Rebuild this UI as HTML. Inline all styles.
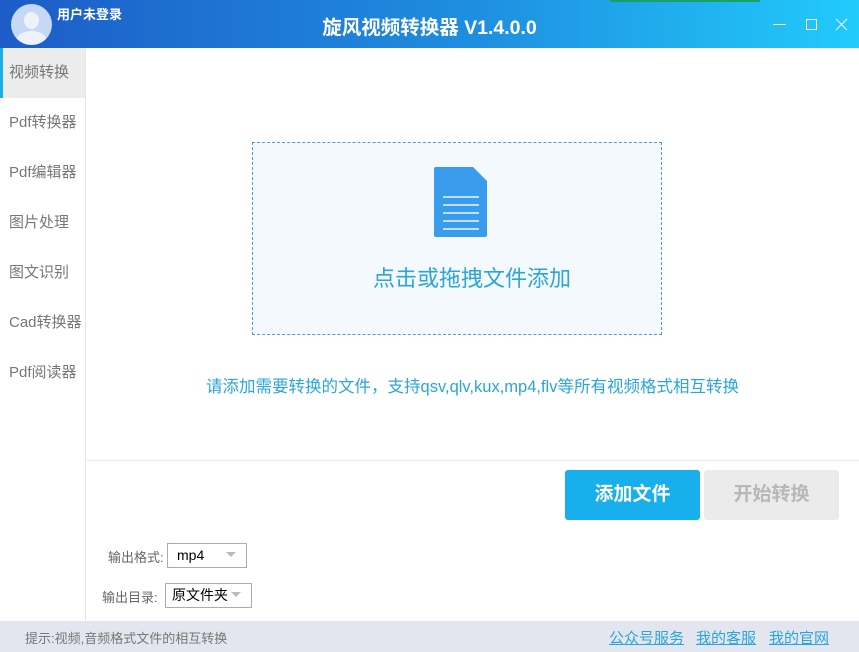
<!DOCTYPE html><html><head><meta charset="utf-8"><style>
*{margin:0;padding:0;box-sizing:border-box}
body{width:859px;height:652px;overflow:hidden;background:#fff;font-family:"Liberation Sans","Noto Sans CJK SC",sans-serif;position:relative}
.a{position:absolute}
#top{left:0;top:0;width:859px;height:48px;background:linear-gradient(90deg,#1d5cc6,#1e8ee0 55%,#22cbfb)}
.side{left:0;top:48px;width:86px;height:573px;border-right:1px solid #e6e6e6;background:#fff}
.it{position:absolute;left:0;width:85px;height:50px;line-height:50px;padding-left:9px;font-size:15px;color:#777}
</style></head><body>
<div id="top" class="a">
<div class="a" style="left:11px;top:4px;width:41px;height:41px;border-radius:50%;background:#c5d8f5;overflow:hidden">
<div class="a" style="left:13px;top:8px;width:15px;height:17px;border-radius:50%;background:#eef3fb"></div>
<div class="a" style="left:5px;top:27px;width:31px;height:20px;border-radius:50%;background:#eef3fb"></div></div>
<div class="a" style="left:57px;top:4px;color:#fff;font-size:13px;font-weight:bold">用户未登录</div>
<div class="a" style="left:0;width:859px;top:11px;text-align:center;color:#fff;font-size:19.5px;font-weight:bold">旋风视频转换器 V1.4.0.0</div>
<div class="a" style="left:773px;top:24px;width:13px;height:1px;background:#fff"></div>
<div class="a" style="left:806px;top:19px;width:11px;height:11px;border:1px solid #fff"></div>
<svg class="a" style="left:835px;top:18px" width="13" height="13"><path d="M1 1L12 12M12 1L1 12" stroke="#fff" stroke-width="1"/></svg>
</div>
<div class="a" style="left:610px;top:0;width:150px;height:2px;background:#1aa06a"></div>
<div class="a side">
<div class="it" style="top:0;background:#ececec;border-left:3px solid #1aaeea;padding-left:6px">视频转换</div>
<div class="it" style="top:50px">Pdf转换器</div>
<div class="it" style="top:100px">Pdf编辑器</div>
<div class="it" style="top:150px">图片处理</div>
<div class="it" style="top:200px">图文识别</div>
<div class="it" style="top:250px">Cad转换器</div>
<div class="it" style="top:300px">Pdf阅读器</div>
</div>
<div class="a" style="left:252px;top:142px;width:410px;height:193px;background:#f3f9fd;border:1px dashed #4a9ed8"></div>
<svg class="a" style="left:434px;top:167px" width="54" height="71"><path d="M2 0H39L53 14V68Q53 70 51 70H2Q0 70 0 68V2Q0 0 2 0Z" fill="#3a9cec"/><g stroke="#eaf4ff" stroke-width="1.5"><path d="M9 38H45M9 46H45M9 54H45M9 62H45"/><path d="M9 30H45"/></g></svg>
<div class="a" style="left:272px;width:400px;top:261px;text-align:center;color:#2ba5dc;font-size:22px">点击或拖拽文件添加</div>
<div class="a" style="left:86px;width:773px;top:373px;text-align:center;color:#2ba5dc;font-size:16.5px">请添加需要转换的文件，支持qsv,qlv,kux,mp4,flv等所有视频格式相互转换</div>
<div class="a" style="left:86px;top:460px;width:773px;height:1px;background:#ececec"></div>
<div class="a" style="left:565px;top:470px;width:135px;height:50px;border-radius:3px;background:#18b0ec;color:#fff;font-size:19px;font-weight:bold;text-align:center;line-height:50px">添加文件</div>
<div class="a" style="left:704px;top:470px;width:135px;height:50px;border-radius:3px;background:#ebebeb;color:#b8b8b8;font-size:19px;font-weight:bold;text-align:center;line-height:50px">开始转换</div>
<div class="a" style="left:108px;top:547px;font-size:13px;color:#666">输出格式:</div>
<div class="a" style="left:167px;top:543px;width:80px;height:25px;border:1px solid #aab;font-size:14px;line-height:23px;padding-left:9px">mp4</div>
<div class="a" style="left:226px;top:552px;border:5px solid transparent;border-top:5px solid #bbb"></div>
<div class="a" style="left:102px;top:587px;font-size:13px;color:#666">输出目录:</div>
<div class="a" style="left:165px;top:583px;width:87px;height:25px;border:1px solid #aab;font-size:14px;line-height:23px;padding-left:6px">原文件夹</div>
<div class="a" style="left:231px;top:592px;border:5px solid transparent;border-top:5px solid #bbb"></div>
<div class="a" style="left:0;top:621px;width:859px;height:31px;background:#e3e6ee"></div>
<div class="a" style="left:25px;top:628px;font-size:13px;color:#777">提示:视频,音频格式文件的相互转换</div>
<div class="a" style="left:609px;top:627px;font-size:15px;color:#2ba5dc;text-decoration:underline">公众号服务</div>
<div class="a" style="left:696px;top:627px;font-size:15px;color:#2ba5dc;text-decoration:underline">我的客服</div>
<div class="a" style="left:769px;top:627px;font-size:15px;color:#2ba5dc;text-decoration:underline">我的官网</div>
</body></html>
